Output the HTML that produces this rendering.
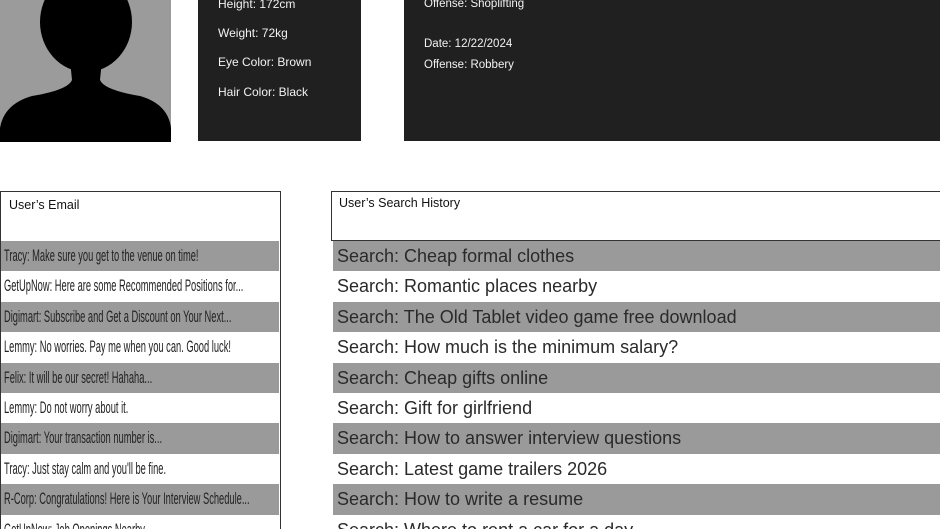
<!DOCTYPE html>
<html><head><meta charset="utf-8"><style>
*{margin:0;padding:0;box-sizing:border-box}
html,body{width:940px;height:529px;overflow:hidden}
body{background:#fff;position:relative;font-family:"Liberation Sans",sans-serif}
.a{position:absolute}
.dark{background:#202020;color:#f2f2f2;font-size:12px}
.dark div{position:absolute;left:20px;white-space:nowrap}
.row{position:absolute;height:30.4px;white-space:nowrap;overflow:hidden;color:#222}
.g{background:#9a9a9a}
.e{left:1px;width:278px;font-family:"Liberation Sans Narrow","Liberation Sans",sans-serif;font-size:16.5px;line-height:30px;padding-left:3px}
.e span{display:inline-block;transform:scaleX(.565);transform-origin:left}
.s{left:333px;width:607px;font-size:18px;line-height:30px;padding-left:4px;color:#2a2a2a}
</style></head><body>
<div class="a" style="left:0;top:0;width:171px;height:142px;background:#9b9b9b;overflow:hidden">
<svg width="171" height="142" viewBox="0 0 171 142"><ellipse cx="86" cy="22" rx="46" ry="50" fill="#000"/><path d="M70 60 L102 60 L100 80 Q104 90 140 96 Q168 104 171 128 L171 142 L0 142 L0 128 Q4 104 32 96 Q68 90 72 80 Z" fill="#000"/></svg>
</div>
<div class="a dark" style="left:198px;top:0;width:163px;height:141px">
<div style="top:-3px">Height: 172cm</div>
<div style="top:26px">Weight: 72kg</div>
<div style="top:55px">Eye Color: Brown</div>
<div style="top:85px">Hair Color: Black</div>
</div>
<div class="a dark" style="left:404px;top:0;width:536px;height:141px;font-size:11.5px">
<div style="top:-2px">Offense: Shoplifting</div>
<div style="top:38px">Date: 12/22/2024</div>
<div style="top:59px">Offense: Robbery</div>
</div>
<div class="a" style="left:0;top:191px;width:281px;height:340px;border:1px solid #333"></div>
<div class="a" style="left:9px;top:198px;font-size:12.5px;color:#111">User’s Email</div>
<div class="a" style="left:331px;top:191px;width:609px;height:50px;border:1px solid #333;border-right:none"></div>
<div class="a" style="left:339px;top:196px;font-size:12.5px;color:#111">User’s Search History</div>
<div class="row e g" style="top:241px"><span>Tracy: Make sure you get to the venue on time!</span></div>
<div class="row e" style="top:271.4px"><span>GetUpNow: Here are some Recommended Positions for...</span></div>
<div class="row e g" style="top:301.8px"><span>Digimart: Subscribe and Get a Discount on Your Next...</span></div>
<div class="row e" style="top:332.2px"><span>Lemmy: No worries. Pay me when you can. Good luck!</span></div>
<div class="row e g" style="top:362.6px"><span>Felix: It will be our secret! Hahaha...</span></div>
<div class="row e" style="top:393px"><span>Lemmy: Do not worry about it.</span></div>
<div class="row e g" style="top:423.4px"><span>Digimart: Your transaction number is...</span></div>
<div class="row e" style="top:453.8px"><span>Tracy: Just stay calm and you'll be fine.</span></div>
<div class="row e g" style="top:484.2px"><span>R-Corp: Congratulations! Here is Your Interview Schedule...</span></div>
<div class="row e" style="top:514.6px"><span>GetUpNow: Job Openings Nearby...</span></div>
<div class="row s g" style="top:241px">Search: Cheap formal clothes</div>
<div class="row s" style="top:271.4px">Search: Romantic places nearby</div>
<div class="row s g" style="top:301.8px">Search: The Old Tablet video game free download</div>
<div class="row s" style="top:332.2px">Search: How much is the minimum salary?</div>
<div class="row s g" style="top:362.6px">Search: Cheap gifts online</div>
<div class="row s" style="top:393px">Search: Gift for girlfriend</div>
<div class="row s g" style="top:423.4px">Search: How to answer interview questions</div>
<div class="row s" style="top:453.8px">Search: Latest game trailers 2026</div>
<div class="row s g" style="top:484.2px">Search: How to write a resume</div>
<div class="row s" style="top:514.6px">Search: Where to rent a car for a day</div>
</body></html>
